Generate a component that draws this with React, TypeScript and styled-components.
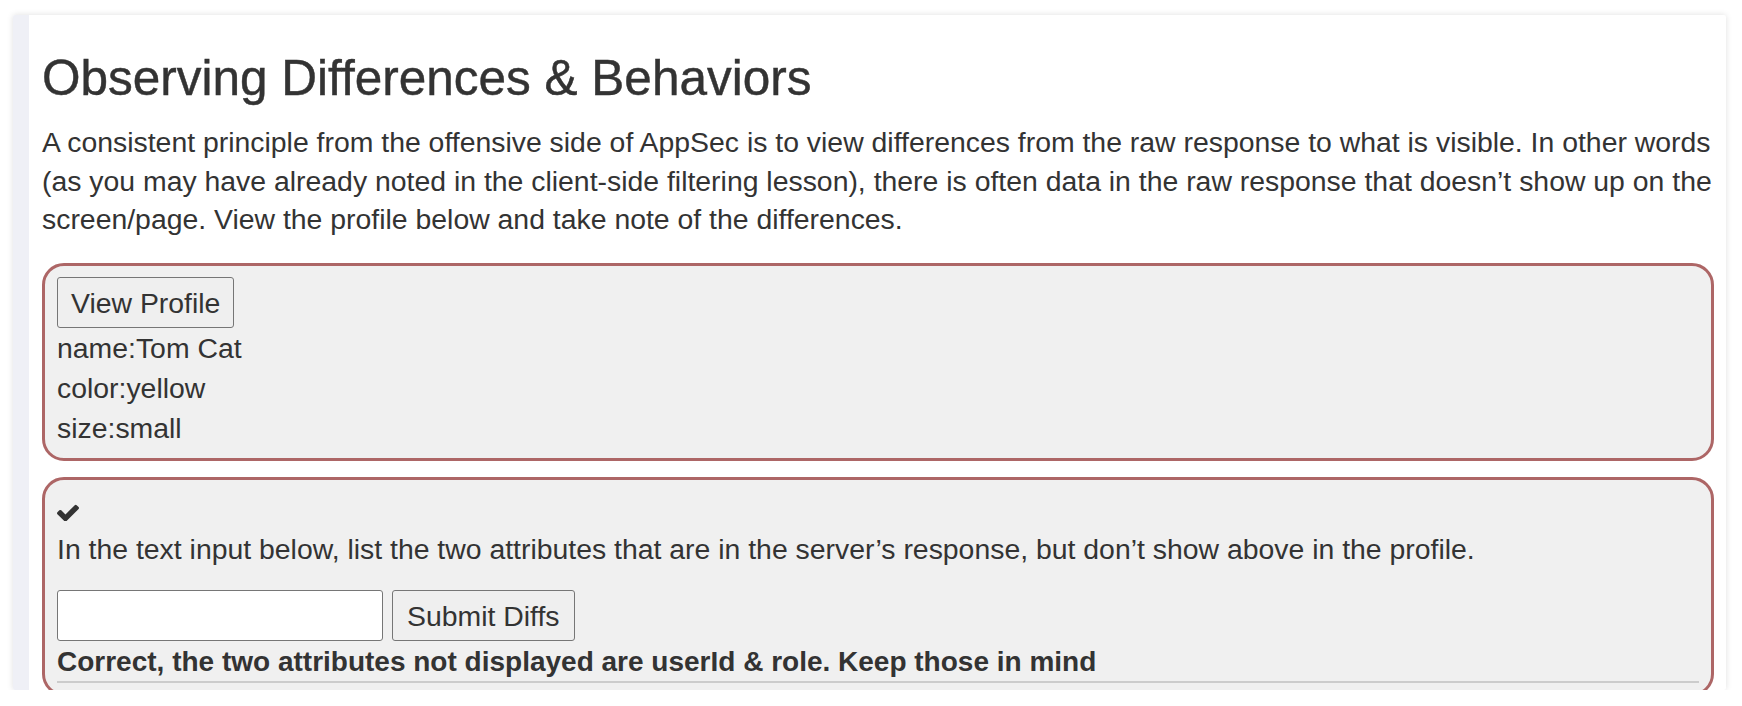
import React from "react";
import styled, { createGlobalStyle } from "styled-components";

const GlobalStyle = createGlobalStyle`
  html, body { margin: 0; padding: 0; background: #ffffff; }
  body { font-family: "Liberation Sans", Arial, Helvetica, sans-serif; color: #333333; }
  * { box-sizing: border-box; }
`;

const Page = styled.div`
  padding: 15px 16px 0 13px;
`;

const Card = styled.div`
  display: flex;
  height: 675px;
  overflow: hidden;
  background: #ffffff;
  border-radius: 2px;
  box-shadow: 0 0 6px rgba(0, 0, 0, 0.13);
`;

const SideStrip = styled.div`
  width: 16px;
  flex: none;
  background: #eff0f6;
`;

const Content = styled.div`
  flex: 1;
  min-width: 0;
  padding: 0 12px 0 13px;
`;

const Heading = styled.h1`
  margin: 36px 0 18px;
  font-size: 49.5px;
  line-height: 1.1;
  font-weight: 400;
  color: #333333;
  -webkit-text-stroke: 0.45px #333333;
`;

const Paragraph = styled.p`
  margin: 0 0 25px;
  font-size: 28.4px;
  line-height: 38.3px;
`;

const AttackBox = styled.div`
  background: #f0f0f0;
  border: 3px solid #ad6666;
  border-radius: 22px;
  padding: 11px 12px 10px;
  font-size: 28.4px;
  line-height: 40px;
  & + & {
    margin-top: 16px;
  }
`;

const NativeButton = styled.button`
  display: inline-block;
  font-family: inherit;
  font-size: 28.4px;
  line-height: 32px;
  color: #333333;
  background: #efefef;
  border: 1px solid #767676;
  border-radius: 3px;
  padding: 8px 13px;
  height: 51px;
  vertical-align: top;
`;

const Line = styled.div``;

const IconRow = styled.div`
  height: 38px;
  display: flex;
  align-items: center;
  padding-top: 4px;
`;

const Prompt = styled.div`
  margin-bottom: 21px;
`;

const FormRow = styled.div`
  display: flex;
  gap: 9px;
  height: 51px;
`;

const TextField = styled.input`
  width: 326px;
  height: 51px;
  background: #ffffff;
  border: 1px solid #767676;
  border-radius: 3px;
  font-family: inherit;
  font-size: 28.4px;
  padding: 0 6px;
`;

const SubmitButton = styled(NativeButton)`
  padding: 8px 14px;
`;

const Feedback = styled.div`
  font-weight: 700;
  font-size: 28px;
  margin-top: 1px;
`;

const Divider = styled.hr`
  margin: -1px 0 0;
  border: 0;
  border-top: 2px solid #cccccc;
`;

const CheckIcon = () => (
  <svg width="22" height="17" viewBox="121 330 1550 1100" fill="#333333" aria-hidden="true">
    <path d="M1671 566q0 40-28 68l-724 724-136 136q-28 28-68 28t-68-28l-136-136-362-362q-28-28-28-68t28-68l136-136q28-28 68-28t68 28l294 295 656-657q28-28 68-28t68 28l136 136q28 28 28 68z" />
  </svg>
);

export default function App() {
  return (
    <>
      <GlobalStyle />
      <Page>
        <Card>
          <SideStrip />
          <Content>
            <Heading>Observing Differences &amp; Behaviors</Heading>
            <Paragraph>
              A consistent principle from the offensive side of AppSec is to view differences from the raw
              response to what is visible. In other words (as you may have already noted in the client-side
              filtering lesson), there is often data in the raw response that doesn’t show up on the
              screen/page. View the profile below and take note of the differences.
            </Paragraph>
            <AttackBox>
              <NativeButton type="button">View Profile</NativeButton>
              <Line>name:Tom Cat</Line>
              <Line>color:yellow</Line>
              <Line>size:small</Line>
            </AttackBox>
            <AttackBox>
              <IconRow>
                <CheckIcon />
              </IconRow>
              <Prompt>
                In the text input below, list the two attributes that are in the server’s response, but don’t
                show above in the profile.
              </Prompt>
              <FormRow>
                <TextField type="text" />
                <SubmitButton type="button">Submit Diffs</SubmitButton>
              </FormRow>
              <Feedback>Correct, the two attributes not displayed are userId &amp; role. Keep those in mind</Feedback>
              <Divider />
            </AttackBox>
          </Content>
        </Card>
      </Page>
    </>
  );
}
